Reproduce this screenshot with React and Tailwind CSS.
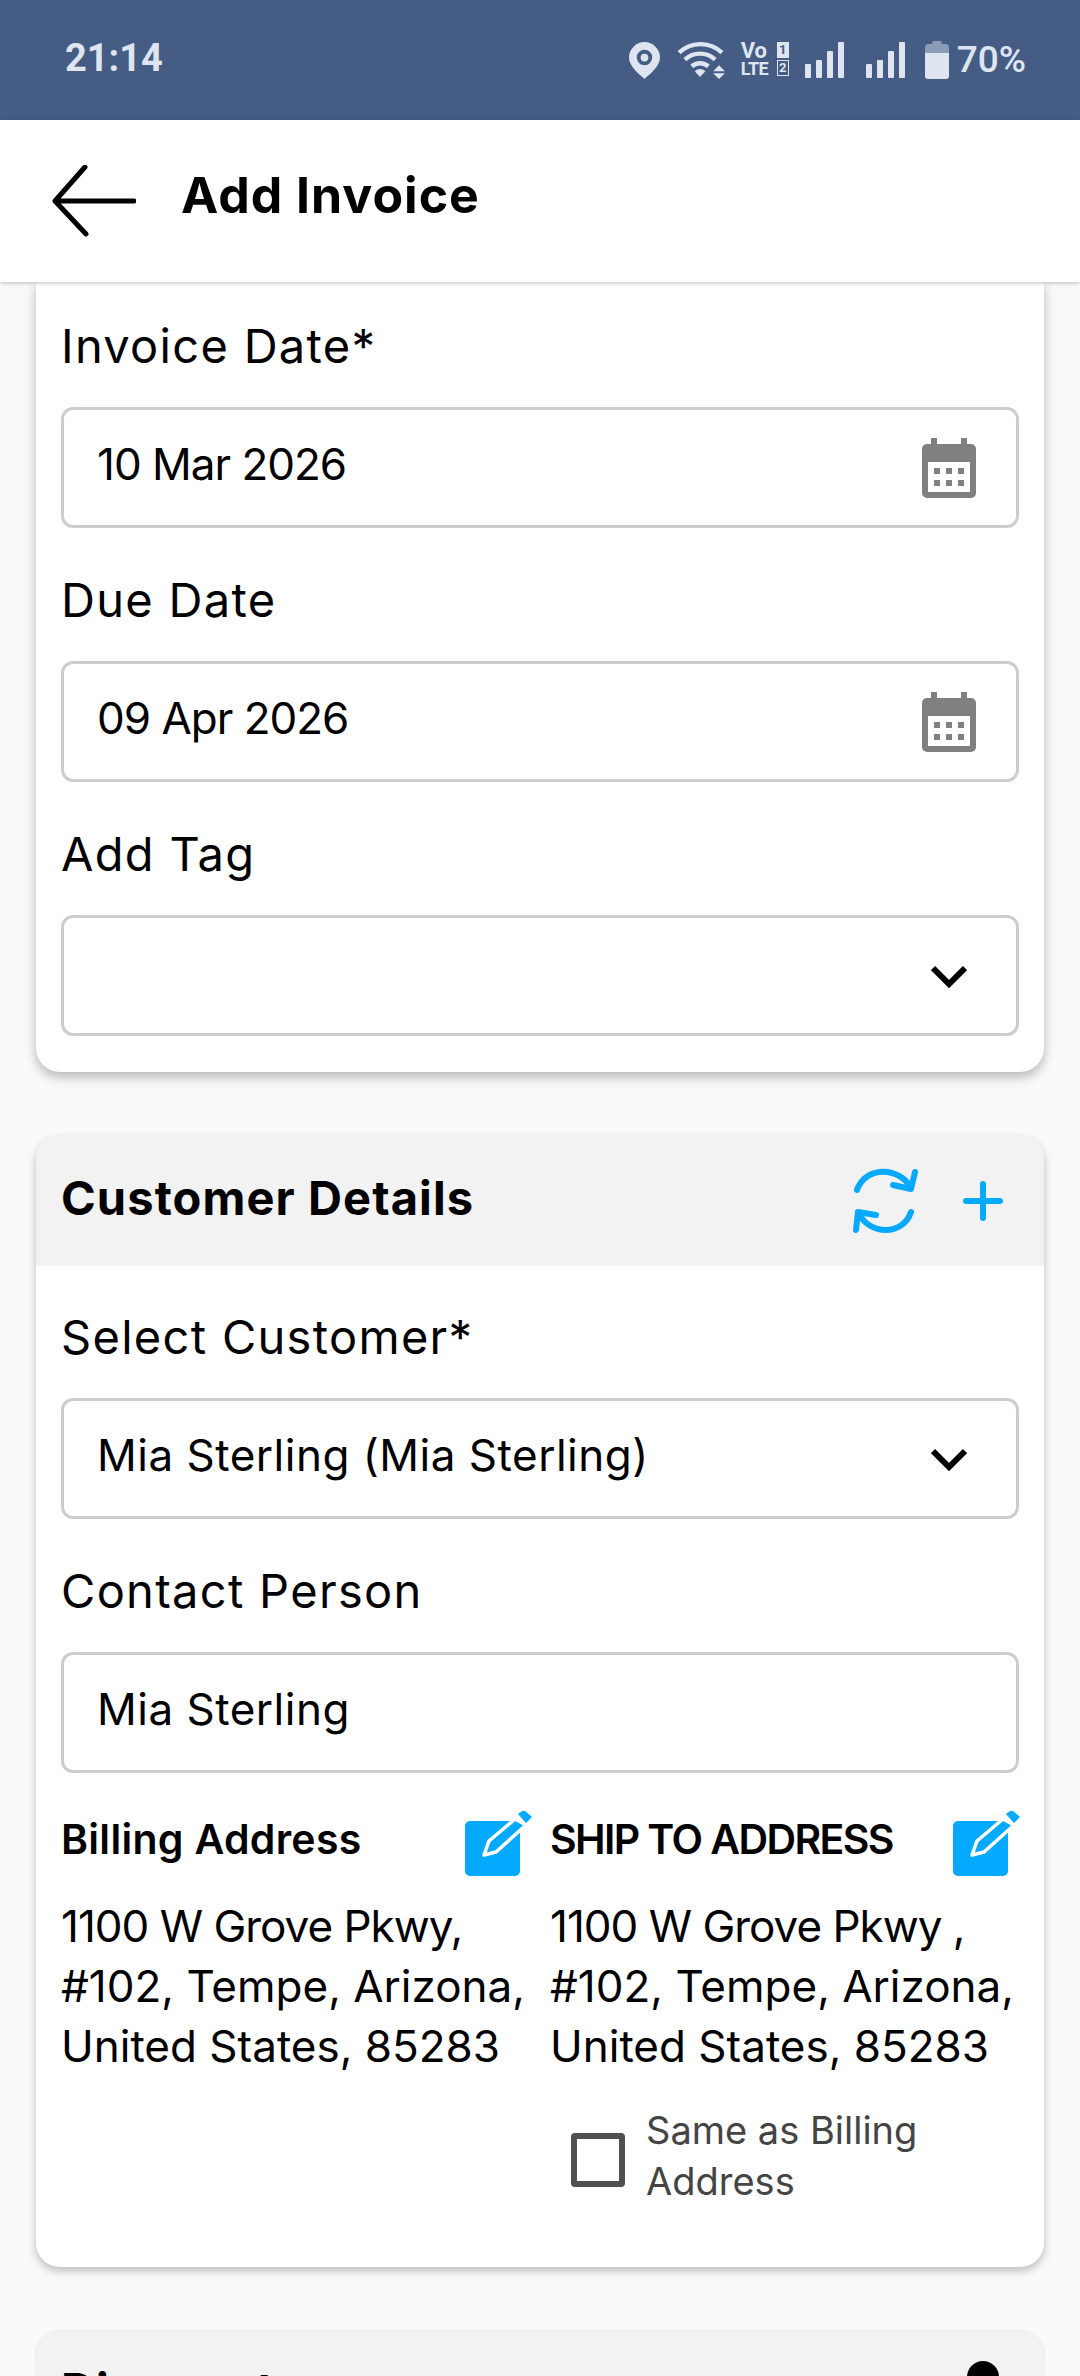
const FONT = "font-['Inter',sans-serif]"

function Calendar() {
  return (
    <svg width="54" height="60" viewBox="0 0 54 60">
      <path fillRule="evenodd" fill="#808080" d="M9 0h6v6h24V0h6v6h4a5 5 0 0 1 5 5v44a5 5 0 0 1-5 5H5a5 5 0 0 1-5-5V11a5 5 0 0 1 5-5h4zM6 24v30h42V24z" />
      <path fill="#808080" d="M12 30h6v6h-6zM24 30h6v6h-6zM36 30h6v6h-6zM12 42h6v6h-6zM24 42h6v6h-6zM36 42h6v6h-6z" />
    </svg>
  )
}

function Chevron() {
  return (
    <svg width="36" height="24" viewBox="0 0 36 24" className="mr-[9px]">
      <path d="M2 4l16 16L34 4" fill="none" stroke="#000" strokeWidth="6" />
    </svg>
  )
}

function Field({ label, value, icon, tight }) {
  return (
    <div>
      <div className="h-[66px] flex items-center text-[47px] leading-none tracking-[1.3px] text-black">{label}</div>
      <div className="mt-[29px] h-[121px] border-[3px] border-[#cdcdcd] rounded-[12px] pl-[33px] pr-[40px] flex items-center justify-between text-[44px] text-black">
        <span className={`-mt-[8px] ${tight ? 'tracking-[-1px]' : 'tracking-[0.5px]'}`}>{value}</span>
        {icon === 'cal' && <Calendar />}
        {icon === 'down' && <Chevron />}
      </div>
    </div>
  )
}

function EditIcon() {
  return (
    <svg width="67" height="65" viewBox="0 0 67 65" className="shrink-0 -mr-[1px]">
      <rect x="0" y="10" width="55" height="55" rx="5" fill="#05a9ff" />
      <path d="M24 30 50 8 61 14 31 41 19 44Z" fill="#05a9ff" stroke="#fff" strokeWidth="3.500" strokeLinejoin="round" />
      <path d="M54 3 59 0 66 6 61 11Z" fill="#05a9ff" stroke="#05a9ff" strokeWidth="1.500" strokeLinejoin="round" />
    </svg>
  )
}

function Address({ title, titleClass, lines }) {
  return (
    <div>
      <div className="flex items-start justify-between h-[65px]">
        <div className={`text-[41px] font-semibold leading-[41px] text-black mt-[8px] whitespace-nowrap ${titleClass}`}>{title}</div>
        <EditIcon />
      </div>
      <div className="mt-[20px] text-[44px] leading-[60px] text-black whitespace-nowrap">
        <div className="tracking-[-1px]">{lines[0]}</div>
        <div>{lines[1]}</div>
        <div>{lines[2]}</div>
      </div>
    </div>
  )
}

function Signal({ className }) {
  return (
    <div className={`flex items-end gap-[5px] h-[36px] ${className}`}>
      <div className="w-[6px] h-[14px] bg-[#dfe5f0] rounded-[1px]" />
      <div className="w-[6px] h-[18px] bg-[#dfe5f0] rounded-[1px]" />
      <div className="w-[6px] h-[27px] bg-[#dfe5f0] rounded-[1px]" />
      <div className="w-[6px] h-[36px] bg-[#dfe5f0] rounded-[1px]" />
    </div>
  )
}

function StatusBar() {
  return (
    <div className="h-[120px] bg-[#455c85] flex items-center justify-between pl-[65px] pr-[54px] font-['Roboto',sans-serif] text-[#dfe5f0] shrink-0">
      <span className="text-[38px] font-bold -mt-[3px]">21:14</span>
      <div className="flex items-center">
        <svg width="31" height="37" viewBox="0 0 32 38">
          <path fillRule="evenodd" fill="#dfe5f0" d="M16 0a16 16 0 0 1 16 16c0 9-10 17-16 22C10 33 0 25 0 16A16 16 0 0 1 16 0zm0 8a8 8 0 1 0 0 16 8 8 0 0 0 0-16zm0 4a4 4 0 1 1 0 8 4 4 0 0 1 0-8z" />
        </svg>
        <svg width="51" height="37" viewBox="0 0 50 38" className="ml-[16px]">
          <g fill="none" stroke="#dfe5f0" strokeWidth="4.500">
            <path d="M2 11a32 32 0 0 1 44 0" />
            <path d="M8 18a23 23 0 0 1 31 0" />
            <path d="M15 25a13 13 0 0 1 17 0" />
          </g>
          <path fill="#dfe5f0" d="M18 30a8 8 0 0 1 11 0l-5.500 6zM43 24l6 6H37zM43 38l-6-6h12z" />
        </svg>
        <div className="ml-[14px] w-[48px] h-[36px] flex flex-col justify-between font-bold leading-[18px]">
          <div className="flex justify-between text-[22px]">
            <span>Vo</span>
            <span className="w-[12px] h-[16px] bg-[#dfe5f0] text-[#455c85] text-[13px] leading-[16px] text-center">1</span>
          </div>
          <div className="flex justify-between text-[18px] tracking-[-0.5px]">
            <span>LTE</span>
            <span className="w-[12px] h-[16px] border border-[#dfe5f0] text-[13px] leading-[14px] text-center tracking-normal">2</span>
          </div>
        </div>
        <Signal className="ml-[16px]" />
        <Signal className="ml-[22px]" />
        <svg width="24" height="38" viewBox="0 0 24 38" className="ml-[20px]">
          <path fill="#8b9cb8" d="M8 0h8l1 3h3a4 4 0 0 1 4 4v5H0V7a4 4 0 0 1 4-4h3z" />
          <path fill="#dfe5f0" d="M0 12h24v23a3 3 0 0 1-3 3H3a3 3 0 0 1-3-3z" />
        </svg>
        <span className="ml-[8px] text-[37px] font-medium">70%</span>
      </div>
    </div>
  )
}

export default function App() {
  return (
    <div className={`h-[2376px] w-[1080px] overflow-hidden bg-[#fafafa] flex flex-col ${FONT}`}>
      <StatusBar />

      {/* Header */}
      <div className="relative z-10 h-[162px] bg-white shadow-[0_1px_4px_rgba(0,0,0,0.25)] flex items-center pl-[52px] shrink-0">
        <svg width="84" height="72" viewBox="0 0 84 72" className="mt-[-1px]">
          <path d="M82 36H3M33 2 3 36l31 33" fill="none" stroke="#000" strokeWidth="5" strokeLinecap="round" strokeLinejoin="round" />
        </svg>
        <h1 className="ml-[45px] -mt-[12px] text-[50px] font-bold text-black tracking-[1px]">Add Invoice</h1>
      </div>

      {/* Invoice dates card */}
      <div className="mx-[36px] bg-white rounded-b-[24px] shadow-[0_5px_12px_rgba(0,0,0,0.28)] px-[25px] pt-[30px] pb-[36px] flex flex-col gap-[38px] shrink-0">
        <Field label="Invoice Date*" value="10 Mar 2026" icon="cal" tight />
        <Field label="Due Date" value="09 Apr 2026" icon="cal" tight />
        <Field label="Add Tag" value="" icon="down" />
      </div>

      {/* Customer card */}
      <div className="mt-[64px] mx-[36px] bg-white rounded-[24px] shadow-[0_4px_10px_rgba(0,0,0,0.25)] overflow-hidden shrink-0">
        <div className="h-[130px] bg-[#f2f2f2] flex items-center justify-between pl-[25px] pr-[41px]">
          <span className="text-[47px] font-bold text-black tracking-[1.1px] -mt-[6px]">Customer Details</span>
          <div className="flex items-center gap-[44px]">
            <svg width="68" height="66" viewBox="0 0 68 66" fill="none" stroke="#05a9ff" strokeWidth="6" strokeLinecap="round" strokeLinejoin="round">
              <path d="M6 22C14 -2 48 -2 60 20M64 4l-4 17-18-4" />
              <path d="M60 44C52 68 18 68 7 44M5 62l2-18 18 3" />
            </svg>
            <svg width="40" height="40" viewBox="0 0 40 40" fill="none" stroke="#05a9ff" strokeWidth="6" strokeLinecap="round">
              <path d="M20 3v34M3 20h34" />
            </svg>
          </div>
        </div>
        <div className="px-[25px] pt-[37px] pb-[60px] flex flex-col gap-[38px]">
          <Field label="Select Customer*" value="Mia Sterling (Mia Sterling)" icon="down" />
          <Field label="Contact Person" value="Mia Sterling" />
          <div className="flex gap-[19px]">
            <div className="w-[470px]">
              <Address title="Billing Address" titleClass="tracking-[0.3px]" lines={['1100 W Grove Pkwy,', '#102, Tempe, Arizona,', 'United States, 85283']} />
            </div>
            <div className="w-[469px]">
              <Address title="SHIP TO ADDRESS" titleClass="tracking-[-1.6px]" lines={['1100 W Grove Pkwy ,', '#102, Tempe, Arizona,', 'United States, 85283']} />
              <div className="flex items-center mt-[29px] ml-[21px]">
                <div className="w-[54px] h-[54px] border-[6px] border-[#505050] rounded-[4px] shrink-0 mt-[7px]" />
                <div className="ml-[21px] text-[38px] leading-[51px] text-[#444444]">Same as Billing<br />Address</div>
              </div>
            </div>
          </div>
        </div>
      </div>

      {/* Discount card, cut off by the screen edge */}
      <div className="mt-[64px] mx-[36px] bg-[#f2f2f2] rounded-t-[24px] shadow-[0_0_3px_rgba(0,0,0,0.12)] h-[130px] pl-[25px] pr-[45px] flex items-start justify-between shrink-0">
        <span className="text-[47px] font-bold text-black tracking-[1.1px] mt-[24px]">Discount</span>
        <div className="w-[32px] h-[44px] rounded-full bg-black mt-[30px]" />
      </div>
    </div>
  )
}
